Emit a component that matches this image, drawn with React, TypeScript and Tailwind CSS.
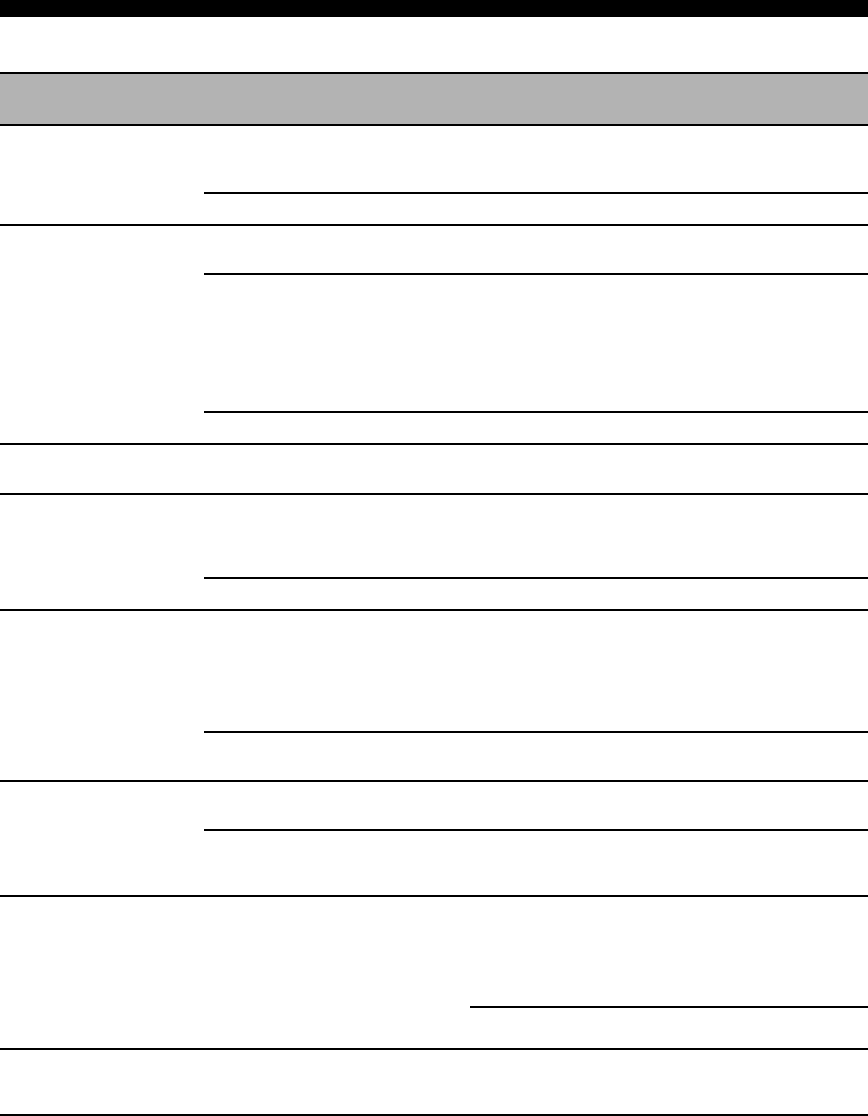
import React from 'react';

// Blank schedule table: rows with optional sub-rows in the right column
interface RowSpec {
  id: string;
  subs: number[]; // heights of each sub-cell in the right column
}

const ROWS: RowSpec[] = [
  { id: 'r1', subs: [68, 30] },
  { id: 'r2', subs: [49, 138, 30] },
  { id: 'r3', subs: [48] },
  { id: 'r4', subs: [84, 30] },
  { id: 'r5', subs: [122, 47] },
  { id: 'r6', subs: [49, 64] },
];

function TableRow({ row }: { row: RowSpec }) {
  return (
    <div className="flex border-b-2 border-black">
      <div className="w-[204px] shrink-0" />
      <div className="flex flex-1 flex-col">
        {row.subs.map((h, i) => (
          <div
            key={i}
            className={i < row.subs.length - 1 ? 'border-b-2 border-black' : ''}
            style={{ height: h }}
          />
        ))}
      </div>
    </div>
  );
}

export default function App() {
  return (
    <div className="w-[868px] min-h-[1116px] bg-white font-['Liberation_Sans',sans-serif] text-black">
      <div className="h-[17px] bg-black" />
      <div className="h-[55px]" />

      <div className="border-y-2 border-black bg-[#b3b3b3] h-[54px]" />

      {ROWS.map((row) => (
        <TableRow key={row.id} row={row} />
      ))}

      {/* row with split right side */}
      <div className="flex border-b-2 border-black">
        <div className="w-[204px] shrink-0" />
        <div className="w-[266px] shrink-0" />
        <div className="flex flex-1 flex-col">
          <div className="h-[111px] border-b-2 border-black" />
          <div className="h-[40px]" />
        </div>
      </div>

      <div className="h-[66px] border-b-2 border-black" />
    </div>
  );
}
